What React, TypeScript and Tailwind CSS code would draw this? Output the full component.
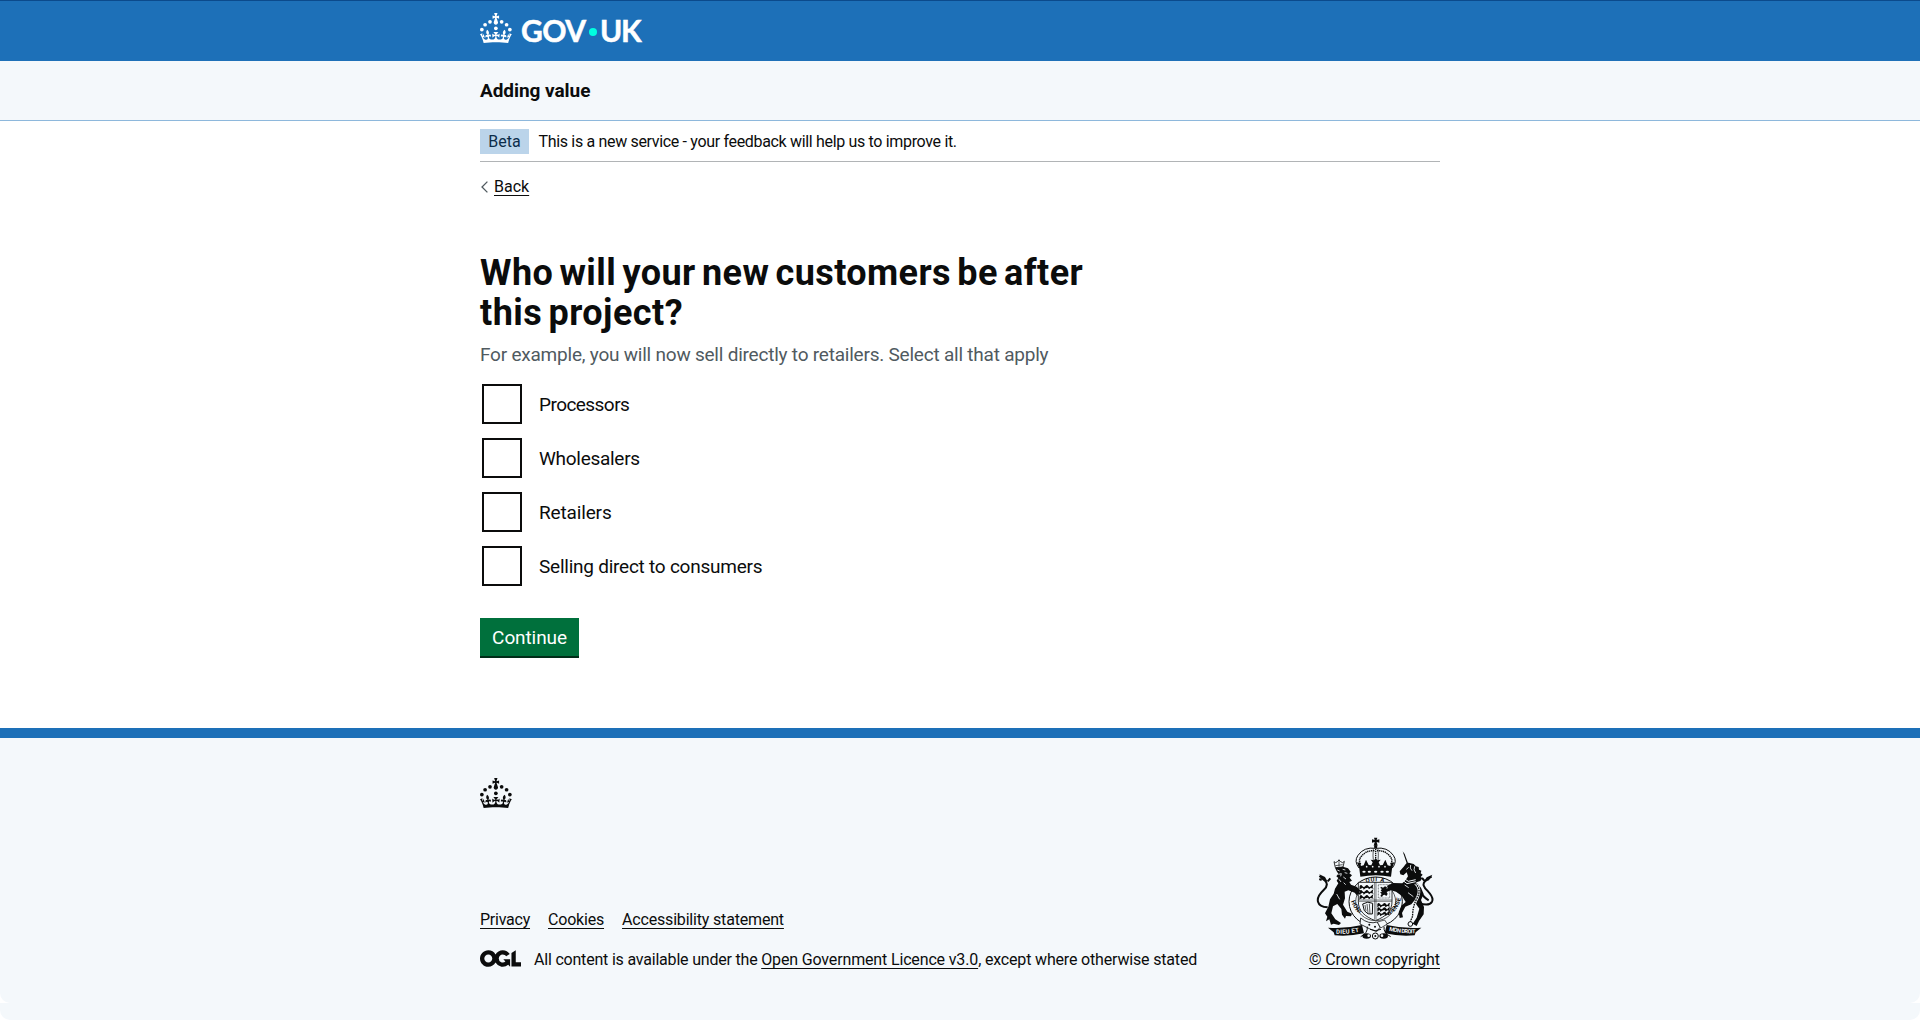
import type { ReactNode } from 'react';

const CROWN_PATH =
  'M33.1,9.8c.2-.1.3-.3.5-.5l4.6,2.4v-6.8l-4.6,1.5c-.1-.2-.3-.3-.5-.5l1.9-5.9h-6.7l1.9,5.9c-.2.1-.3.3-.5.5l-4.6-1.5v6.8l4.6-2.4c.1.2.3.3.5.5l-2.6,8c-.9,2.8,1.2,5.7,4.1,5.7h0c3,0,5.1-2.9,4.1-5.7l-2.6-8ZM37,37.9s-3.4,3.8-4.1,6.1c2.2,0,4.2-.5,6.4-2.8l-.7,8.5c-2-2.8-4.4-4.1-5.7-3.8.1,3.1.5,6.7,5.8,7.2,3.7.3,6.7-1.5,7-3.8.4-2.6-2-4.3-3.7-1.6-1.4-4.5,2.4-6.1,4.9-3.2-1.9-4.5-1.8-7.7,2.4-10.9,3,4,2.6,7.3-1.2,11.1,2.4-1.3,6.2,0,4,4.6-1.2-2.8-3.7-2.2-4.2.2-.3,1.7.7,3.7,3,4.2,1.9.3,4.7-.9,7-5.9-1.3,0-2.4.7-3.9,1.7l2.4-8c.6,2.3,1.4,3.7,2.2,4.5.6-1.6.5-2.8,0-5.3l5,1.8c-2.6,3.6-5.2,8.7-7.3,17.5-7.4-1.1-15.7-1.7-24.5-1.7h0c-8.8,0-17.1.6-24.5,1.7-2.1-8.9-4.7-13.9-7.3-17.5l5-1.8c-.5,2.5-.6,3.7,0,5.3.8-.8,1.6-2.3,2.2-4.5l2.4,8c-1.5-1-2.6-1.7-3.9-1.7,2.3,5,5.2,6.2,7,5.9,2.3-.4,3.3-2.4,3-4.2-.5-2.4-3-3.1-4.2-.2-2.2-4.6,1.6-6,4-4.6-3.7-3.7-4.2-7.1-1.2-11.1,4.2,3.2,4.3,6.4,2.4,10.9,2.5-2.8,6.3-1.3,4.9,3.2-1.8-2.7-4.1-1-3.7,1.6.3,2.3,3.3,4.1,7,3.8,5.4-.5,5.7-4.2,5.8-7.2-1.3-.2-3.7,1-5.7,3.8l-.7-8.5c2.2,2.3,4.2,2.7,6.4,2.8-.7-2.3-4.1-6.1-4.1-6.1h10.6,0Z';

const CROWN_JEWELS = [
  [20, 17.6],
  [10.2, 23.5],
  [3.7, 33.2],
  [31.7, 30.6],
  [43.3, 17.6],
  [53.2, 23.5],
  [59.7, 33.2],
];

function Crown() {
  return (
    <svg viewBox="0 0 64 60" className="block h-[30px] w-8 shrink-0" fill="currentColor" aria-hidden="true">
      {CROWN_JEWELS.map(([x, y]) => (
        <circle key={x} cx={x} cy={y} r="3.7" />
      ))}
      <path d={CROWN_PATH} />
    </svg>
  );
}

function OglLogo() {
  return (
    <svg viewBox="0 0 483.2 195.7" className="block h-[17px] w-[41px] shrink-0" fill="currentColor" aria-hidden="true">
      <path d="M421.5 142.8V.1l-50.7 32.3v161.1h112.4v-50.7zm-122.3-9.6A47.12 47.12 0 0 1 221 97.8c0-26 21.1-47.1 47.1-47.1 16.7 0 31.4 8.7 39.7 21.8l42.7-27.2A97.63 97.63 0 0 0 268.1 0c-36.5 0-68.3 20.1-85.1 49.7A98 98 0 0 0 97.8 0C43.9 0 0 43.9 0 97.8s43.9 97.8 97.8 97.8c36.5 0 68.3-20.1 85.1-49.7a97.76 97.76 0 0 0 149.6 25.4l19.4 22.2h3v-87.8h-80l24.3 27.5zM97.8 145c-26 0-47.1-21.1-47.1-47.1s21.1-47.1 47.1-47.1 47.1 21.1 47.1 47.1S123.8 145 97.8 145" />
    </svg>
  );
}

function RoyalArms() {
  return (
    <svg viewBox="78 51 357 309" className="ml-0.5 block h-[103px] w-[119px]" fill="#0b0c0c" stroke="none" aria-hidden="true">
      {/* garter and shield */}
      <ellipse cx="257" cy="245" rx="80" ry="74" fill="#f4f8fb" stroke="#0b0c0c" strokeWidth="3" />
      <ellipse cx="257" cy="245" rx="60" ry="57" fill="none" stroke="#0b0c0c" strokeWidth="2" />
      <path id="garter-top" d="M189 245a68 61 0 0 1 136 0" fill="none" />
      <path id="garter-low" d="M182 238a76 70 0 0 0 150 0" fill="none" />
      <text fontFamily="Roboto" fontWeight="700" fontSize="18" letterSpacing="2">
        <textPath href="#garter-top" startOffset="72">
          QUI A
        </textPath>
      </text>
      <text fontFamily="Roboto" fontWeight="700" fontSize="18" letterSpacing="1">
        <textPath href="#garter-low" startOffset="6">
          HONI
        </textPath>
      </text>
      <text fontFamily="Roboto" fontWeight="700" fontSize="18" letterSpacing="1">
        <textPath href="#garter-low" startOffset="150">
          PENSE
        </textPath>
      </text>
      <path d="M205 187h101v58c0 27-18 45-50 57-32-12-51-30-51-57Z" fill="#f4f8fb" stroke="#0b0c0c" strokeWidth="2.5" />
      <path d="M254 187v112M205 240h101M258 187v112M205 244h101" stroke="#0b0c0c" strokeWidth="1.5" />
      {[198, 213, 228].map((y) => (
        <path
          key={y}
          d={`M209 ${y}q4-6 8 0t9 0 9 0 9-1l6-4-2 9 3 4-9-2-5 4-3-5-8 2-5 4-2-6-7 3-4 3Z`}
        />
      ))}
      {[252, 265, 278].map((y) => (
        <path
          key={y}
          d={`M262 ${y}q4-6 8 0t9 0 9 0 6-1l6-3-2 8 1 4-7-2-5 4-3-5-8 2-5 4-2-6-5 3-2 3Z`}
        />
      ))}
      <path d="M265 194h34v40h-34Z" fill="none" stroke="#0b0c0c" strokeWidth="1.5" strokeDasharray="3 1.5" />
      <path d="M273 200l6 3 6-4 6 3-3 7 5 3-3 4 3 6-4 6-5-4-5 2-3 5-5-3 4-6-5-5 6-1-4-5 4-4-5-3Z" />
      <path d="M218 252q16-10 30-2l-1 32q-14 4-24-10Z" fill="none" stroke="#0b0c0c" strokeWidth="3" />
      <path d="M225 255l3 18M231 252l3 27M238 251l2 30" stroke="#0b0c0c" strokeWidth="2" />
      <path d="M212 294q24 20 50 12l8 16-10 13-22-9-28-14Z" fill="#f4f8fb" stroke="#0b0c0c" strokeWidth="2.5" />
      <path d="M262 306l22-6 8 12-20 12Z" fill="#f4f8fb" stroke="#0b0c0c" strokeWidth="2" />
      <circle cx="238" cy="314" r="3" />
      <circle cx="255" cy="320" r="3" />

      {/* crown */}
      <path d="M252 53h10l-2 7 8-2v10l-8-2 3 11h-12l3-11-8 2V58l8 2Z" />
      <circle cx="257" cy="80" r="5" />
      <path
        d="M207 144q-16-20-3-38 18-26 53-21 35-5 53 21 13 18-3 38"
        fill="none"
        stroke="#0b0c0c"
        strokeWidth="3"
      />
      <path
        d="M212 133q-8-12 2-24 15-19 41-17M302 133q8-12-2-24-15-19-41-17"
        fill="none"
        stroke="#0b0c0c"
        strokeWidth="4.5"
        strokeDasharray="4 2"
      />
      <path d="M250 88q-2 18 0 34M264 88q2 18 0 34" fill="none" stroke="#0b0c0c" strokeWidth="2" />
      <path d="M257 87v32" stroke="#0b0c0c" strokeWidth="4" strokeDasharray="4 2" />
      <path d="M201 127l9 2 3 9 8-2 7-17 8 16 8 1 4-9-6-8 10 2 5-7 5 7 10-2-6 8 4 9 8-1 8-16 7 17 8 2 3-9 9-2-7 19-3 24q-46-9-92 0l-3-24Z" />
      {[222, 238, 257, 276, 292].map((x) => (
        <ellipse key={x} cx={x} cy="155" rx="5" ry="3" fill="#f4f8fb" />
      ))}
      {[230, 248, 267, 285].map((x) => (
        <circle key={x} cx={x} cy="140" r="2.5" fill="#f4f8fb" />
      ))}

      {/* lion */}
      <path d="M132 125l5 3 5-3 5-5 5 5 6 3 5-4-4 17-23 2Z" fill="#f4f8fb" stroke="#0b0c0c" strokeWidth="2.5" />
      <path d="M147 118v22M136 137l22-3" stroke="#0b0c0c" strokeWidth="2" />
      <path d="M135 143l24-3 15 5 8 10-4 5 8 6-7 7 7 9-8 4 5 8 17 6 13 14-6 1 6 9-9-3-2 7-8-10-19-7-11 4 1 20-6 19 13 21 14 6-3 8-15-1-3 8-9-12-2-17-12-15-13 7-5 21 12 18 17 11-6 6-16-4-8 3-5-16-10 6 4-14-7-10 10-20 5-22 11-17 4-15 10-16-5-8 5-8-6-5 6-8-5-7Z" />
      <path
        d="M113 262q-25-2-29-17-4-15 17-35 16-15 5-27-8-9-18-15M95 180l-7-3M113 184l8-9"
        fill="none"
        stroke="#0b0c0c"
        strokeWidth="6"
      />
      <path d="M88 163l17 8 8 14-15-4Z" />
      <path d="M142 150l7 3M158 148l8 2M145 163l9-2-2 8M164 158l8 2M147 178l6 8M160 171l8 6M161 188l6 6M140 222l9 16" stroke="#f4f8fb" strokeWidth="2.5" fill="none" />

      {/* unicorn */}
      <path d="M338 94l6 8 10 27-4 1Z" />
      <path d="M349 130l-8 10-12 14 2 9 9 3 10-9 4 12-7 11-10 10-28-1-18 8 2 8-10 2 8 8 12-4 15 4 17 12 12 19-13 11-8 20 3 17 10-2-3-13 10-19 18-7 8-10 16 23-8 27-12 18 12 7 7-15 14-20 1-22-9-21 8-18-8-19-14-16 12-4 6-9-5-3 6-7-6-4 2-8-7-3-1-8-8-2-7-7-15-4Z" />
      <path
        d="M391 212q6 18 25 29M389 250q29 9 37-5 6-12-12-31-22-19-8-31 7-8 19-13M405 184l-9-10"
        fill="none"
        stroke="#0b0c0c"
        strokeWidth="6"
      />
      <path d="M427 164l-17 8-9 14 16-5Z" />
      <path d="M331 168l24 16 22-5M333 177l18 14 26-6" fill="none" stroke="#f4f8fb" strokeWidth="3" />
      <path d="M362 135q-4 10 4 17M374 139q-5 11 3 20M356 142l-7 6M354 218l16 12M344 195l12 8" fill="none" stroke="#f4f8fb" strokeWidth="2.5" />
      <path d="M376 190q18 17 7 41-16 28-15 57l-7 17" fill="none" stroke="#f4f8fb" strokeWidth="8" />
      <path d="M376 190q18 17 7 41-16 28-15 57l-7 17" fill="none" stroke="#0b0c0c" strokeWidth="4" strokeDasharray="5 2.5" />
      <circle cx="361" cy="312" r="7" fill="none" stroke="#0b0c0c" strokeWidth="3" />

      {/* motto scroll */}
      <path d="M114 323q50 4 102-8l6 25q-45 10-88 6l-3-9Z" />
      <path d="M394 323q-50 4-104-8l-6 25q45 10 90 6l3-9Z" />
      <path id="motto-left" d="M138 341q38 2 78-7" fill="none" />
      <path id="motto-right" d="M297 332q40 9 82 8" fill="none" />
      <text fontFamily="Roboto" fontWeight="700" fontSize="18" fill="#f4f8fb">
        <textPath href="#motto-left" textLength="70">
          DIEU ET
        </textPath>
      </text>
      <text fontFamily="Roboto" fontWeight="700" fontSize="17" fill="#f4f8fb">
        <textPath href="#motto-right" textLength="80">
          MON DROIT
        </textPath>
      </text>
      <path d="M212 350q22-11 20-30M302 350q-22-11-20-30M240 328q15 8 33 0" fill="none" stroke="#0b0c0c" strokeWidth="3" />
      <ellipse cx="230" cy="348" rx="13" ry="8" />
      <ellipse cx="281" cy="348" rx="13" ry="8" />
      <ellipse cx="256" cy="348" rx="9" ry="9" fill="#f4f8fb" stroke="#0b0c0c" strokeWidth="3" />
      <circle cx="236" cy="347" r="4" fill="#f4f8fb" />
      <circle cx="276" cy="347" r="4" fill="#f4f8fb" />
      <circle cx="256" cy="348" r="3" />
    </svg>
  );
}

function Container({ children, className = '' }: { children: ReactNode; className?: string }) {
  return <div className={`mx-auto w-[960px] ${className}`}>{children}</div>;
}

function TextLink({ children, className = '' }: { children: ReactNode; className?: string }) {
  return (
    <a href="#" className={`underline decoration-1 underline-offset-[3px] ${className}`}>
      {children}
    </a>
  );
}

const OPTIONS = [
  { label: 'Processors', tracking: 'tracking-[-0.55px]' },
  { label: 'Wholesalers', tracking: 'tracking-[-0.28px]' },
  { label: 'Retailers', tracking: 'tracking-[-0.15px]' },
  { label: 'Selling direct to consumers', tracking: 'tracking-[-0.24px]' },
];

export default function App() {
  return (
    <div className="h-[1020px] overflow-hidden bg-white font-['Roboto',sans-serif] text-base leading-5 text-[#0b0c0c]">
      <div className="flex h-[1003px] flex-col overflow-hidden rounded-b-[10px]">
        <header>
          <div className="h-[61px] border-t border-[#0b4a8c] bg-[#1d70b8] text-white">
            <Container className="flex pt-3">
              <Crown />
              <div className="-mt-px ml-[9px] flex h-[37px] items-center font-['Lato',sans-serif] text-[30px] leading-[37px] font-bold [-webkit-text-stroke:0.5px_currentColor]">
                <span className="w-[68px] tracking-[-0.5px]">GOV</span>
                <span className="mt-0.5 size-2 rounded-full bg-[#00ffe0]" />
                <span className="ml-[3px] tracking-[-1.2px]">UK</span>
              </div>
            </Container>
          </div>
          <div className="h-[60px] border-b border-[#8eb8dc] bg-[#f4f8fb]">
            <Container className="flex h-full items-center text-[19px] leading-[25px] font-bold tracking-[-0.05px]">
              Adding value
            </Container>
          </div>
        </header>

        <Container>
          <div className="flex border-b border-[#b1b4b6] pt-2 pb-[7px] leading-[25px]">
            <strong className="w-[49px] bg-[#bbd4ea] text-center font-normal text-[#0c2d4a]">Beta</strong>
            <span className="ml-[9.5px] tracking-[-0.33px]">
              This is a new service - your feedback will help us to improve it.
            </span>
          </div>
          <div className="mt-[15px] flex items-center">
            <svg viewBox="0 0 7 12" className="mr-1.5 ml-px h-3 w-[7px]" fill="none" stroke="#505a5f" strokeWidth="1.3">
              <path d="M6.4.6 1 6l5.4 5.4" />
            </svg>
            <TextLink>Back</TextLink>
          </div>

          <main className="mt-14">
            <h1 className="text-4xl leading-10 font-bold [word-spacing:-3px]">
              <span className="block tracking-[0.4px]">Who will your new customers be after</span>
              <span className="block tracking-[0.45px]">this project?</span>
            </h1>
            <p className="mt-[9px] text-[19px] leading-[25px] tracking-[-0.22px] text-[#505a5f]">
              For example, you will now sell directly to retailers. Select all that apply
            </p>
            <div className="mt-[17px] flex flex-col gap-3.5 text-[19px] leading-[25px]">
              {OPTIONS.map(({ label, tracking }) => (
                <label key={label} className="flex items-center pl-0.5">
                  <input type="checkbox" className="size-10 appearance-none border-2 border-[#0b0c0c] bg-white" />
                  <span className={`ml-[17px] ${tracking}`}>{label}</span>
                </label>
              ))}
            </div>
            <button className="mt-8 block h-10 w-[99px] border-b-2 border-[#002d18] bg-[#00703c] pt-px text-[19px] leading-[37px] tracking-[-0.1px] text-white">
              Continue
            </button>
          </main>
        </Container>

        <footer className="mt-[70px] grow border-t-10 border-[#1d70b8] bg-[#f4f8fb] pt-10">
          <Container>
            <Crown />
            <div className="mt-[29px] flex items-end justify-between">
              <div>
                <div className="mb-5 flex">
                  <TextLink className="mr-[18px] tracking-[-0.24px]">Privacy</TextLink>
                  <TextLink className="mr-[18px] tracking-[-0.2px]">Cookies</TextLink>
                  <TextLink className="tracking-[-0.18px]">Accessibility statement</TextLink>
                </div>
                <div className="flex">
                  <OglLogo />
                  <p className="ml-[13px] tracking-[-0.2px]">
                    All content is available under the{' '}
                    <TextLink className="tracking-[-0.15px]">Open Government Licence v3.0</TextLink>
                    <span className="tracking-[-0.17px]">, except where otherwise stated</span>
                  </p>
                </div>
              </div>
              <div className="flex flex-col items-center">
                <RoyalArms />
                <TextLink className="mt-2.5 tracking-[-0.08px]">© Crown copyright</TextLink>
              </div>
            </div>
          </Container>
        </footer>
      </div>
      <div className="h-[17px] rounded-b-[10px] bg-[#f4f8fb]" />
    </div>
  );
}
